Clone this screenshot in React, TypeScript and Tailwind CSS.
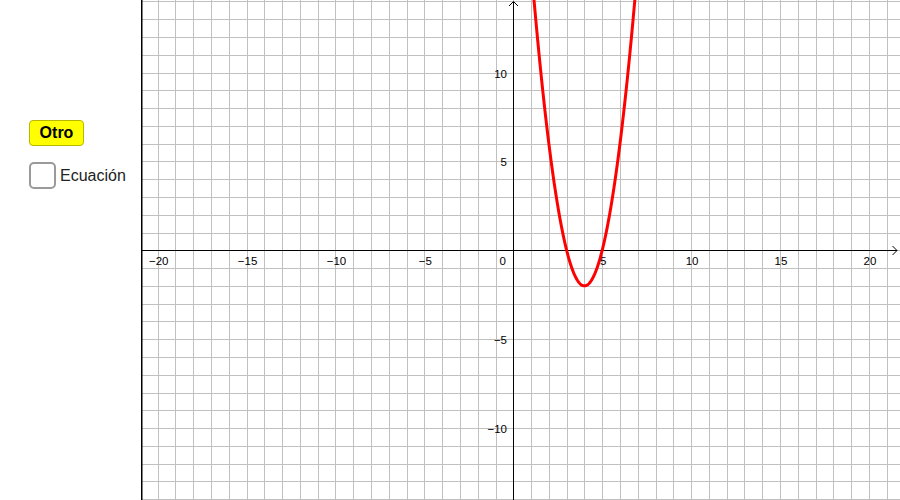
import React from "react";

const OX = 513.3;
const OY = 250.3;
const S = 17.78;

function sx(x: number) {
  return OX + x * S;
}
function sy(y: number) {
  return OY - y * S;
}

function fmt(n: number) {
  return n < 0 ? "\u2212" + Math.abs(n) : String(n);
}

function Graph() {
  const vLines: number[] = [];
  for (let k = -21; k <= 22; k++) {
    const x = Math.round(sx(k)) + 0.5;
    if (x > 142 && x < 900) vLines.push(x);
  }
  const hLines: number[] = [];
  for (let k = -15; k <= 15; k++) {
    const y = Math.round(sy(k)) + 0.5;
    if (y > 0 && y < 500) hLines.push(y);
  }

  // f(x) = 2(x - 4)^2 - 2
  const pts: string[] = [];
  for (let x = 0.9; x <= 7.1; x += 0.02) {
    const y = 2 * (x - 4) * (x - 4) - 2;
    pts.push(`${sx(x).toFixed(2)},${sy(y).toFixed(2)}`);
  }

  const xTicks = [-20, -15, -10, -5, 5, 10, 15, 20];
  const yTicks = [10, 5, -5, -10];
  const ax = Math.round(OX) + 0.5;
  const ay = Math.round(OY) + 0.5;

  return (
    <svg
      width={759}
      height={500}
      viewBox="141 0 759 500"
      className="block"
      style={{ fontFamily: '"Liberation Sans", Arial, sans-serif' }}
    >
      <g stroke="#c0c0c0" strokeWidth={1} shapeRendering="crispEdges">
        {vLines.map((x) => (
          <line key={`v${x}`} x1={x} y1={0} x2={x} y2={500} />
        ))}
        {hLines.map((y) => (
          <line key={`h${y}`} x1={141} y1={y} x2={900} y2={y} />
        ))}
      </g>

      <g stroke="#000" strokeWidth={1} fill="none">
        <line x1={141} y1={ay} x2={897} y2={ay} shapeRendering="crispEdges" />
        <line x1={ax} y1={2} x2={ax} y2={500} shapeRendering="crispEdges" />
        <polyline points={`${ax - 4.5},${6} ${ax},${1.5} ${ax + 4.5},${6}`} />
        <polyline points={`${892.5},${ay - 4.5} ${897},${ay} ${892.5},${ay + 4.5}`} />
      </g>

      <line x1={141.75} y1={0} x2={141.75} y2={500} stroke="#000" strokeWidth={1.5} />

      <g fontSize={11.5} fill="#000">
        {xTicks.map((t) => (
          <text key={`x${t}`} x={sx(t) + 1} y={265} textAnchor="middle">
            {fmt(t)}
          </text>
        ))}
        <text x={506} y={265} textAnchor="end">
          0
        </text>
        {yTicks.map((t) => (
          <text key={`y${t}`} x={507} y={sy(t) + 5} textAnchor="end">
            {fmt(t)}
          </text>
        ))}
      </g>

      <polyline
        points={pts.join(" ")}
        fill="none"
        stroke="#ff0000"
        strokeWidth={3}
        strokeLinejoin="round"
      />
    </svg>
  );
}

export default function App() {
  return (
    <div
      className="w-[900px] h-[500px] overflow-hidden bg-white flex"
      style={{ fontFamily: '"Liberation Sans", Arial, sans-serif' }}
    >
      <div className="w-[141px] shrink-0 pl-[29px] pt-[120px] flex flex-col gap-[16px]">
        <button className="w-[55px] h-[26px] bg-[#ffff00] border border-[#b8b800] rounded-[4px] text-[16px] font-bold text-black leading-none">
          Otro
        </button>
        <label className="flex items-center gap-[4px]">
          <span className="w-[27px] h-[27px] border-2 border-[#9a9a9a] rounded-[5px] bg-white" />
          <span className="text-[16px] text-[#222]">Ecuación</span>
        </label>
      </div>
      <Graph />
    </div>
  );
}
